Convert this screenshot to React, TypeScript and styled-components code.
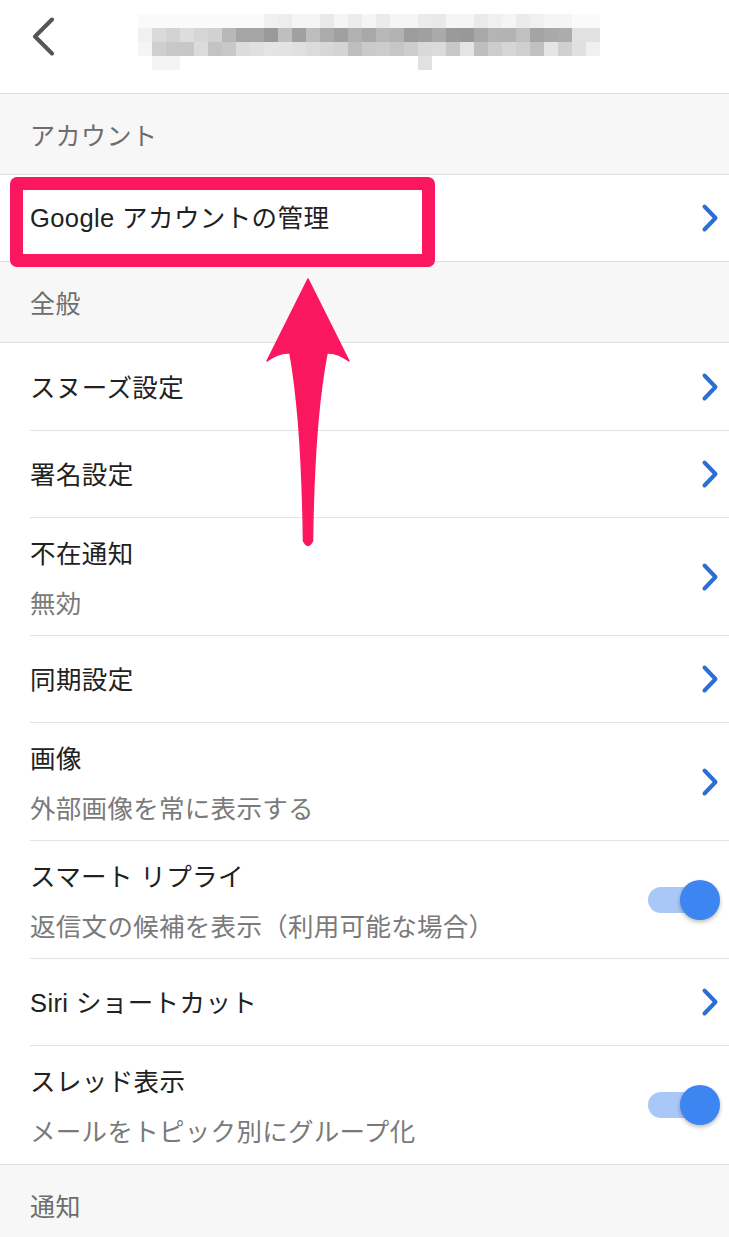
import React from "react";
import styled, { createGlobalStyle } from "styled-components";

const GlobalStyle = createGlobalStyle`
  html, body { margin: 0; padding: 0; background: #ffffff; }
  body { font-family: "Liberation Sans", "Noto Sans CJK JP", sans-serif; -webkit-font-smoothing: antialiased; }
  * { box-sizing: border-box; }
`;

const Page = styled.div`
  position: relative;
  width: 729px;
  height: 1237px;
  overflow: hidden;
  background: #ffffff;
`;

const Header = styled.header`
  height: 94px;
  display: flex;
  align-items: center;
  border-bottom: 1px solid #dedede;
  padding-left: 31px;
`;

const BackButton = styled.div`
  width: 28px;
  height: 40px;
  display: flex;
  align-items: center;
  margin-top: -20px;
`;

const BlurTitle = styled.div`
  flex: none;
  margin-left: 75px;
  width: 480px;
  height: 70px;
  margin-top: -22px;
`;

const SectionHeader = styled.div`
  height: 81px;
  display: flex;
  align-items: center;
  padding-left: 30px;
  background: #f7f7f7;
  border-bottom: 1px solid #dedede;
  color: #6d6d6d;
  font-family: "Noto Sans CJK JP", sans-serif;
  font-size: 25px;
  letter-spacing: 0.5px;
`;

const Group = styled.div`
  border-bottom: 1px solid #dedede;
`;

const Row = styled.div<{ $tall?: boolean }>`
  margin-left: 30px;
  height: ${(p) => (p.$tall ? 118 : 87)}px;
  display: flex;
  align-items: center;
  justify-content: space-between;
  padding-right: 10px;
  border-bottom: 1px solid #e3e3e3;
  &:first-child { height: ${(p) => (p.$tall ? 118 : 88)}px; }
  &:last-child { border-bottom: none; height: ${(p) => (p.$tall ? 118 : 86)}px; }
`;

const Texts = styled.div`
  display: flex;
  flex-direction: column;
  gap: 12px;
  padding-top: 2px;
`;

const Title = styled.div`
  font-size: 25.5px;
  line-height: 36px;
  color: #212121;
  font-family: "Liberation Sans", "Noto Sans CJK JP", sans-serif;
  letter-spacing: 0.4px;
`;

const Subtitle = styled.div`
  font-size: 25.5px;
  line-height: 36px;
  color: #7a7a7a;
  font-family: "Noto Sans CJK JP", sans-serif;
  letter-spacing: 0.3px;
`;

const ChevronBox = styled.div`
  width: 18px;
  height: 30px;
  display: flex;
  align-items: center;
  justify-content: center;
`;

const Toggle = styled.div`
  position: relative;
  width: 72px;
  height: 40px;
  margin-right: -1px;
`;

const Track = styled.div`
  position: absolute;
  left: 0;
  top: 7px;
  width: 60px;
  height: 26px;
  border-radius: 13px;
  background: #a9c8f8;
`;

const Knob = styled.div`
  position: absolute;
  right: 0;
  top: 0;
  width: 40px;
  height: 40px;
  border-radius: 50%;
  background: #3d85f0;
  box-shadow: 0 2px 4px rgba(0, 0, 0, 0.28);
`;

const Highlight = styled.div`
  position: absolute;
  left: 10px;
  top: 177px;
  width: 425px;
  height: 90px;
  border: 13px solid #fb1760;
  border-radius: 7px;
  pointer-events: none;
`;

const ArrowSvg = styled.svg`
  position: absolute;
  left: 0;
  top: 0;
  pointer-events: none;
`;

const Chevron = () => (
  <ChevronBox>
    <svg width="18" height="30" viewBox="0 0 18 30">
      <path d="M3.5 3.5 L14.5 15 L3.5 26.5" fill="none" stroke="#2c6fd2" strokeWidth="4" strokeLinecap="round" strokeLinejoin="round" />
    </svg>
  </ChevronBox>
);

const Switch = () => (
  <Toggle>
    <Track />
    <Knob />
  </Toggle>
);

function blurCells() {
  const cells: { x: number; y: number; c: string }[] = [];
  let seed = 7;
  const rnd = () => {
    seed = (seed * 9301 + 49297) % 233280;
    return seed / 233280;
  };
  for (let r = 0; r < 4; r++) {
    for (let c = 0; c < 33; c++) {
      let v = 255;
      const n = rnd();
      if (r === 0) {
        if (c >= 9 && c <= 30) v = n < 0.45 ? 232 + Math.floor(n * 20) : 245;
        else v = 250;
      } else if (r === 1) {
        if (c === 0) v = 240;
        else if (c <= 5) v = 205 + Math.floor(n * 30);
        else if (c <= 30) v = 150 + Math.floor(n * 45);
        else v = 225;
      } else if (r === 2) {
        if (c === 0) v = 245;
        else if (c <= 31) v = 190 + Math.floor(n * 40);
        else v = 240;
      } else {
        if (c === 20) v = 225;
        else if (c === 1 || c === 2) v = 243;
        else v = 255;
      }
      if (v < 255) {
        const h = v.toString(16).padStart(2, "0");
        cells.push({ x: c * 14, y: r * 14, c: `#${h}${h}${h}` });
      }
    }
  }
  return cells;
}

const cells = blurCells();

type Item = { title: string; sub?: string; toggle?: boolean };

const general: Item[] = [
  { title: "スヌーズ設定" },
  { title: "署名設定" },
  { title: "不在通知", sub: "無効" },
  { title: "同期設定" },
  { title: "画像", sub: "外部画像を常に表示する" },
  { title: "スマート リプライ", sub: "返信文の候補を表示（利用可能な場合）", toggle: true },
  { title: "Siri ショートカット" },
  { title: "スレッド表示", sub: "メールをトピック別にグループ化", toggle: true },
];

export default function App() {
  return (
    <Page>
      <GlobalStyle />
      <Header>
        <BackButton>
          <svg width="26" height="40" viewBox="0 0 26 40">
            <path d="M21 2.5 L4 19.5 L21 36.5" fill="none" stroke="#555555" strokeWidth="4" strokeLinecap="round" strokeLinejoin="round" />
          </svg>
        </BackButton>
        <BlurTitle>
          <svg width="480" height="70" viewBox="0 0 480 70">
            <g transform="translate(4,13)">
              {cells.map((c, i) => (
                <rect key={i} x={c.x} y={c.y} width="14" height="14" fill={c.c} />
              ))}
            </g>
          </svg>
        </BlurTitle>
      </Header>
      <SectionHeader>アカウント</SectionHeader>
      <Group>
        <Row>
          <Title>Google アカウントの管理</Title>
          <Chevron />
        </Row>
      </Group>
      <SectionHeader>全般</SectionHeader>
      <Group>
        {general.map((it) => (
          <Row key={it.title} $tall={!!it.sub}>
            <Texts>
              <Title>{it.title}</Title>
              {it.sub && <Subtitle>{it.sub}</Subtitle>}
            </Texts>
            {it.toggle ? <Switch /> : <Chevron />}
          </Row>
        ))}
      </Group>
      <SectionHeader>通知</SectionHeader>
      <Highlight />
      <ArrowSvg width="729" height="1237" viewBox="0 0 729 1237">
        <path
          d="M308 279 L349 361 Q337 352 327 353 Q314 420 312.5 541 Q308 550 303.5 541 Q302 420 290 353 Q279 352 267 361 Z"
          fill="#fb1760"
          stroke="#fb1760"
          strokeWidth="1.5"
          strokeLinejoin="round"
        />
      </ArrowSvg>
    </Page>
  );
}
